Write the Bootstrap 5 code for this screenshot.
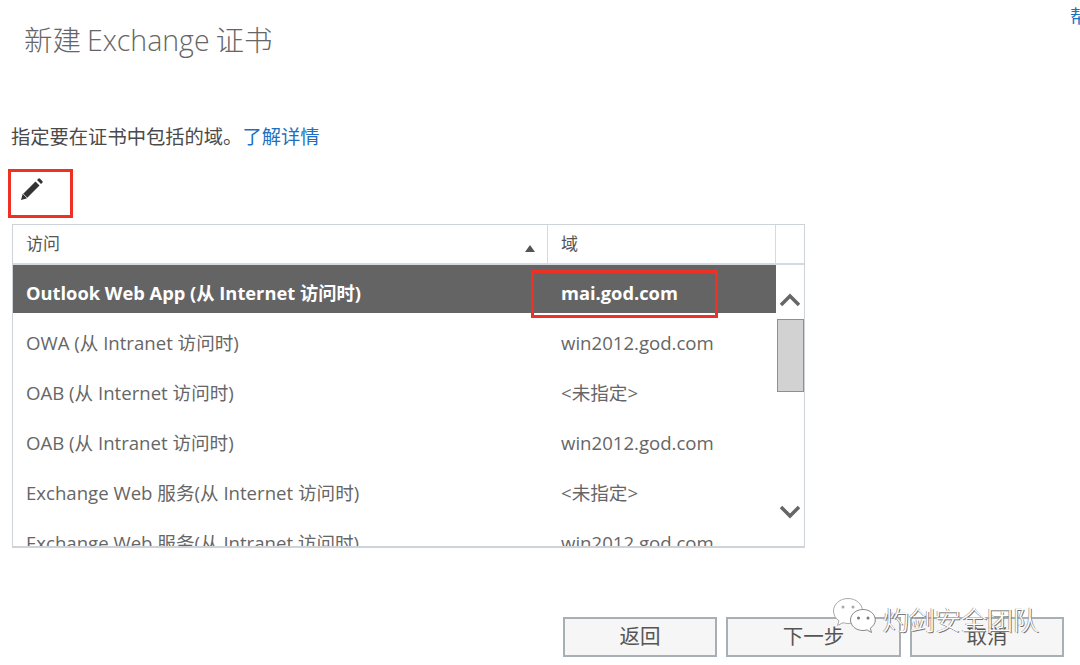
<!DOCTYPE html>
<html lang="zh-CN">
<head>
  <meta charset="UTF-8" />
  <meta name="viewport" content="width=device-width, initial-scale=1.0" />
  <title>新建 Exchange 证书</title>
  <link href="https://cdn.jsdelivr.net/npm/bootstrap@5.3.3/dist/css/bootstrap.min.css" rel="stylesheet" />
  <style>
    body {
      height: 665px;
      overflow: hidden;
      background: #fff;
      color: #555;
      font-family: "Open Sans", "Noto Sans CJK SC", sans-serif;
    }

    .page-wrap { position: relative; height: 665px; overflow: hidden; }

    .top-bar { padding: 19px 0 0 24px; }
    .page-title { font-size: 28.5px; line-height: 42px; font-weight: 300; color: #666; margin: 0; word-spacing: -1.500px; }
    .help-link { width: 10px; height: 26px; margin-top: -16px; overflow: hidden; white-space: nowrap; font-size: 18px; line-height: 26px; color: #1e6fc0; text-decoration: none; }

    .intro-line { margin: 63px 0 0 11px; font-size: 19.300px; line-height: 26px; color: #4a4a4a; }
    .intro-line a { color: #1e6fc0; text-decoration: none; }

    .pencil-btn { width: 46px; height: 46px; margin: 17px 0 0 10px; padding: 8px 0 0 10px; }

    .grid-frame { width: 793px; height: 324px; margin: 11px 0 0 12px; border: 1px solid #cdd3d8; border-bottom-width: 2px; overflow: hidden; }
    .grid-table { table-layout: fixed; width: 791px; border-collapse: separate; border-spacing: 0; }
    .grid-table th { height: 40px; padding: 0 13px; font-size: 17px; font-weight: 400; color: #555; border-bottom: 2px solid #d5dade; border-right: 1px solid #d5dade; position: relative; }
    .grid-table th:last-child { border-right: 0; }
    .grid-table td { height: 50px; padding: 17px 13px 9px; font-size: 18.600px; line-height: 22px; color: #666; white-space: nowrap; border-bottom: 2px solid #fff; vertical-align: top; }
    .grid-table tr.picked td { background: #646464; color: #fff; font-weight: 700; font-size: 18.300px; }
    .grid-table tr.picked td.scroll-cell { padding: 0; background: #fff; }

    .sort-mark { position: absolute; right: 12px; top: 20px; width: 0; height: 0; border: 5px solid transparent; border-top: 0; border-bottom: 7px solid #555; }

    .scroll-track { height: 270px; padding: 28px 0 0 0; }
    .scroll-thumb { width: 27px; height: 73px; margin: 12px 0 113px; background: #d2d2d2; border: 1px solid #8f8f8f; }

    .foot-btns { gap: 9px; margin-top: 69px; padding-right: 16px; }
    .foot-btns .btn { height: 40px; padding: 0 0 3px; background: #f6f6f6; border: 2px solid #a7b1b5; border-radius: 0; font-size: 20.500px; line-height: 30px; color: #555; }
    .btn-back, .btn-cancel { width: 154px; }
    .btn-next { width: 175px; }

    .red-box { position: absolute; border: 3px solid #ee3124; pointer-events: none; }
    .red-pencil { left: 8px; top: 169px; width: 65px; height: 49px; }
    .red-domain { left: 531px; top: 270px; width: 187px; height: 48px; }

    .mark-logo { position: absolute; left: 832px; top: 597px; }
    .mark-text { position: absolute; left: 883px; top: 601px; font-size: 26px; line-height: 38px; font-weight: 300; color: #fff; text-shadow: 1px 1px 0 #777, -1px 0 0 #aaa; white-space: nowrap; }
  </style>
</head>
<body>
  <div class="page-wrap">
    <div class="top-bar d-flex justify-content-between align-items-start">
      <h1 class="page-title">新建 Exchange 证书</h1>
      <a class="help-link" href="#">帮助</a>
    </div>

    <p class="intro-line">指定要在证书中包括的域。<a href="#">了解详情</a></p>

    <div class="pencil-btn">
      <svg width="24" height="24" viewBox="0 0 24 24" aria-hidden="true">
        <path d="M1 23l1.500-5.500L15.500 4.500l4 4L6.500 21.500z" fill="#333" />
        <path d="M17 3l1.300-1.300a1.300 1.300 0 0 1 1.800 0l2.200 2.200a1.300 1.300 0 0 1 0 1.800L21 7z" fill="#333" />
        <path d="M3 16.800l4.200 4.200" stroke="#fff" stroke-width=".8" />
      </svg>
    </div>

    <div class="grid-frame">
      <table class="grid-table">
        <colgroup><col style="width:535px" /><col style="width:228px" /><col /></colgroup>
        <thead>
          <tr><th>访问<span class="sort-mark"></span></th><th>域</th><th></th></tr>
        </thead>
        <tbody>
          <tr class="picked">
            <td>Outlook Web App (从 Internet 访问时)</td>
            <td>mai.god.com</td>
            <td class="scroll-cell" rowspan="6">
              <div class="scroll-track d-flex flex-column align-items-center">
                <svg width="22" height="14" viewBox="0 0 22 14" class="flex-shrink-0" aria-hidden="true"><path d="M2 12l9-9 9 9" fill="none" stroke="#666" stroke-width="3.500" /></svg>
                <div class="scroll-thumb flex-shrink-0"></div>
                <svg width="22" height="14" viewBox="0 0 22 14" class="flex-shrink-0" aria-hidden="true"><path d="M2 2l9 9 9-9" fill="none" stroke="#666" stroke-width="3.500" /></svg>
              </div>
            </td>
          </tr>
          <tr><td>OWA (从 Intranet 访问时)</td><td>win2012.god.com</td></tr>
          <tr><td>OAB (从 Internet 访问时)</td><td>&lt;未指定&gt;</td></tr>
          <tr><td>OAB (从 Intranet 访问时)</td><td>win2012.god.com</td></tr>
          <tr><td>Exchange Web 服务(从 Internet 访问时)</td><td>&lt;未指定&gt;</td></tr>
          <tr><td>Exchange Web 服务(从 Intranet 访问时)</td><td>win2012.god.com</td></tr>
        </tbody>
      </table>
    </div>

    <div class="foot-btns d-flex justify-content-end">
      <button type="button" class="btn btn-back">返回</button>
      <button type="button" class="btn btn-next">下一步</button>
      <button type="button" class="btn btn-cancel">取消</button>
    </div>

    <div class="red-box red-pencil"></div>
    <div class="red-box red-domain"></div>

    <svg class="mark-logo" width="46" height="40" viewBox="0 0 46 40" aria-hidden="true">
      <path d="M16 1.500C8 1.500 1.500 7 1.500 14c0 4 2.200 7.500 5.500 9.800L5.500 28.500l5.500-2.800c1.600.5 3.300.8 5 .8 8 0 14.500-5.600 14.500-12.500S24 1.500 16 1.500z" fill="#fff" stroke="#aaa" />
      <path d="M31 12.500c-7 0-12.500 4.700-12.500 10.500S24 33.500 31 33.500c1.400 0 2.800-.2 4-.6l4.500 2.600-1.200-4.300c3-2 5-4.900 5-8.200 0-5.800-5.300-10.500-12.300-10.500z" fill="#fff" stroke="#888" />
      <circle cx="11" cy="10" r="1.500" fill="#aaa" /><circle cx="21" cy="10" r="1.500" fill="#aaa" />
      <circle cx="26.500" cy="21" r="1.500" fill="#777" /><circle cx="36" cy="21" r="1.500" fill="#777" />
    </svg>
    <div class="mark-text">灼剑安全团队</div>
  </div>

  <script src="https://cdn.jsdelivr.net/npm/bootstrap@5.3.3/dist/js/bootstrap.bundle.min.js"></script>
</body>
</html>
